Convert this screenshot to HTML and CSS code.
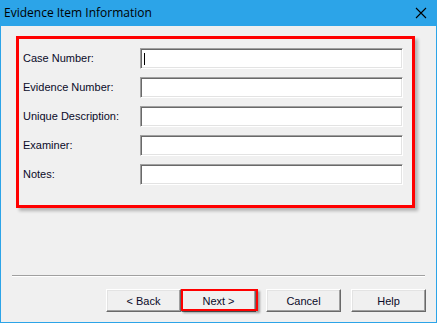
FILE: index.html
```html
<!DOCTYPE html>
<html>
<head>
<meta charset="utf-8">
<link rel="stylesheet" href="styles.css">
</head>
<body>
<div class="window">
  <div class="titlebar">
    <span class="title">Evidence Item Information</span>
    <svg class="close" width="12" height="12" viewBox="0 0 12 12"><path d="M1 1 L11 11 M11 1 L1 11" stroke="#000" stroke-width="1.1" fill="none"/></svg>
  </div>
  <div class="client">
    <div class="highlight">
      <div class="form">
        <div class="row"><label>Case Number:</label><div class="field focused"><span class="caret"></span></div></div>
        <div class="row"><label>Evidence Number:</label><div class="field"></div></div>
        <div class="row"><label>Unique Description:</label><div class="field"></div></div>
        <div class="row"><label>Examiner:</label><div class="field"></div></div>
        <div class="row"><label>Notes:</label><div class="field"></div></div>
      </div>
    </div>
    <div class="spacer"></div>
    <div class="separator"></div>
    <div class="buttons">
      <div class="pair">
        <div class="btn">&lt; Back</div>
        <div class="btn marked">Next &gt;</div>
      </div>
      <div class="btn">Cancel</div>
      <div class="btn">Help</div>
    </div>
  </div>
</div>
</body>
</html>
```
FILE: styles.css
```css
html, body {
  margin: 0;
  padding: 0;
  background: #f0f0f0;
}
.window {
  width: 437px;
  height: 323px;
  display: flex;
  flex-direction: column;
  background: #f0f0f0;
}
.titlebar {
  height: 26px;
  background: #2ca4e8;
  display: flex;
  align-items: center;
  justify-content: space-between;
  padding: 0 10px 0 4px;
  box-sizing: border-box;
  flex: none;
}
.title {
  font-family: "Open Sans", "Noto Sans", sans-serif;
  font-size: 12px;
  color: #000;
  position: relative;
  top: -1px;
}
.close {
  display: block;
}
.client {
  flex: 1;
  border: 1px solid #2ca4e8;
  border-top: 0;
  display: flex;
  flex-direction: column;
  box-sizing: border-box;
  padding: 10px 10px 10px 15px;
}
.highlight {
  width: 399px;
  height: 172px;
  box-sizing: border-box;
  border: 3px solid #ff0000;
  box-shadow: 3px 3px 3px rgba(0,0,0,0.25);
  padding: 9px 9px 0 4px;
}
.form {
  display: flex;
  flex-direction: column;
  gap: 8px;
}
.row {
  display: flex;
  align-items: center;
  height: 21px;
}
.row label {
  width: 117px;
  font-family: "Liberation Sans", Arial, sans-serif;
  font-size: 11px;
  color: #0a0a28;
  position: relative;
  top: -1px;
}
.field {
  flex: 1;
  height: 21px;
  box-sizing: border-box;
  background: #fff;
  border-top: 1px solid #a0a0a0;
  border-left: 1px solid #a0a0a0;
  border-bottom: 1px solid #fff;
  border-right: 1px solid #fff;
  box-shadow: inset 1px 1px 0 #696969, inset -1px -1px 0 #e3e3e3;
  position: relative;
}
.caret {
  position: absolute;
  left: 3px;
  top: 4px;
  width: 1px;
  height: 12px;
  background: #000;
}
.spacer {
  flex: 1;
}
.separator {
  height: 1px;
  background: #a0a0a0;
  border-bottom: 1px solid #fff;
  margin: 0 0 12px -4px;
  width: 413px;
}
.buttons {
  display: flex;
  justify-content: flex-end;
  gap: 10px;
  padding-right: 0;
}
.pair {
  display: flex;
}
.btn {
  width: 75px;
  height: 23px;
  box-sizing: border-box;
  background: #f0f0f0;
  border-top: 1px solid #fff;
  border-left: 1px solid #fff;
  border-right: 1px solid #696969;
  border-bottom: 1px solid #696969;
  box-shadow: inset -1px -1px 0 #a0a0a0, inset 1px 1px 0 #e3e3e3;
  display: flex;
  align-items: center;
  justify-content: center;
  font-family: "Liberation Sans", Arial, sans-serif;
  font-size: 11px;
  color: #0a0a28;
  position: relative;
}
.btn.marked::after {
  content: "";
  position: absolute;
  left: -1px;
  top: -1px;
  width: 77px;
  height: 22px;
  box-sizing: border-box;
  border: 2px solid #ff0000;
  box-shadow: 2px 2px 2px rgba(0,0,0,0.35);
}
```
